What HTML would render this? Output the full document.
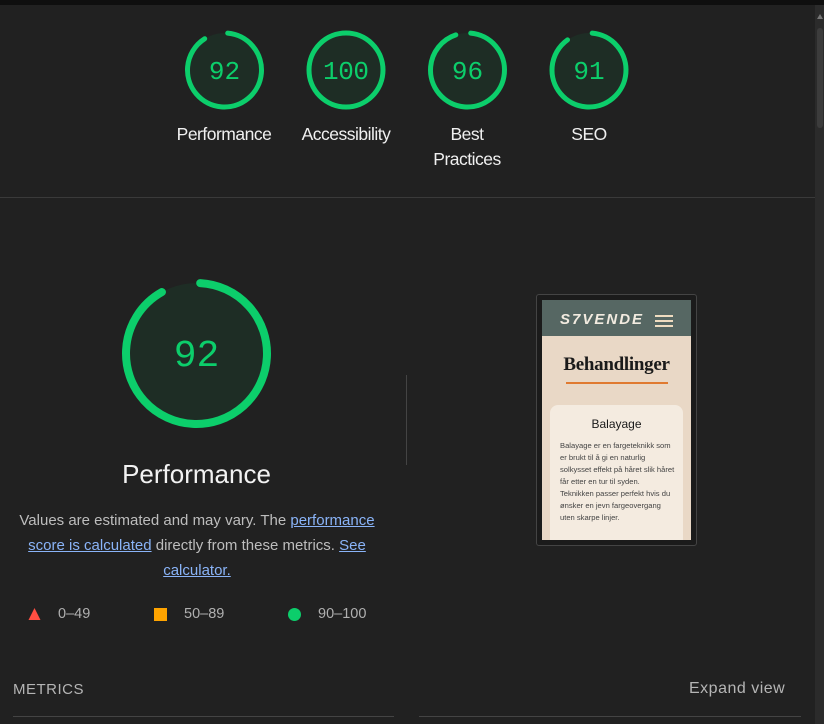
<!DOCTYPE html>
<html><head><meta charset="utf-8"><style>
*{margin:0;padding:0;box-sizing:border-box}
body{width:824px;height:724px;background:#212121;font-family:"Liberation Sans",sans-serif;overflow:hidden;position:relative;color:#e8e8e8}
.abs{position:absolute}
.lbl{position:absolute;width:140px;text-align:center;font-size:17.5px;line-height:25px;color:#f0f0f0;letter-spacing:-0.5px}
.num{font-family:"Liberation Mono",monospace;fill:#0cce6b}
a{color:#8ab4f8;text-decoration:underline}
</style></head><body>
<div class="abs" style="left:0;top:0;width:824px;height:5px;background:#0f0f0f"></div>
<div class="abs" style="left:815px;top:5px;width:9px;height:719px;background:#2b2b2b"></div>
<div class="abs" style="left:817px;top:28px;width:6px;height:100px;background:#3c3c3c;border-radius:3px"></div>
<div class="abs" style="left:817px;top:14px;width:0;height:0;border-left:3px solid transparent;border-right:3px solid transparent;border-bottom:5px solid #777"></div>

<svg class="abs" style="left:0;top:0" width="815" height="200">
<g>
<circle cx="224.5" cy="70" r="37" fill="#1e2d25"/>
<circle cx="346" cy="70" r="37" fill="#1e2d25"/>
<circle cx="467.5" cy="70" r="37" fill="#1e2d25"/>
<circle cx="589" cy="70" r="37" fill="#1e2d25"/>
</g>
<g stroke="#0cce6b" stroke-width="5" fill="none" stroke-linecap="round">
<circle cx="224.5" cy="70" r="37" stroke-dasharray="208 300" transform="rotate(-85 224.5 70)"/>
<circle cx="346" cy="70" r="37" stroke-dasharray="233 300" transform="rotate(-90 346 70)"/>
<circle cx="467.5" cy="70" r="37" stroke-dasharray="217 300" transform="rotate(-85 467.5 70)"/>
<circle cx="589" cy="70" r="37" stroke-dasharray="206 300" transform="rotate(-85 589 70)"/>
</g>
<g class="num" font-size="26" text-anchor="middle">
<text x="224.5" y="79">92</text><text x="346" y="79" textLength="46">100</text><text x="467.5" y="79">96</text><text x="589" y="79">91</text>
</g>
</svg>
<div class="lbl" style="left:154px;top:122px">Performance</div>
<div class="lbl" style="left:276px;top:122px">Accessibility</div>
<div class="lbl" style="left:397px;top:122px">Best<br>Practices</div>
<div class="lbl" style="left:519px;top:122px">SEO</div>
<div class="abs" style="left:0;top:197px;width:815px;height:1px;background:#3a3a3a"></div>

<svg class="abs" style="left:0;top:270px" width="400" height="170">
<circle cx="196.5" cy="83.5" r="70.5" fill="#1e2d25"/>
<circle cx="196.5" cy="83.5" r="70.5" fill="none" stroke="#0cce6b" stroke-width="8" stroke-linecap="round" stroke-dasharray="403 500" transform="rotate(-87 196.5 83.5)"/>
<text x="196.5" y="96" text-anchor="middle" class="num" font-size="38">92</text>
</svg>
<div class="abs" style="left:0;top:459px;width:393px;text-align:center;font-size:26px;color:#f2f2f2">Performance</div>
<div class="abs" style="left:12px;top:508px;width:370px;text-align:center;font-size:15px;line-height:25px;color:#bdbdbd">Values are estimated and may vary. The <a>performance score is calculated</a> directly from these metrics. <a>See calculator.</a></div>
<div class="abs" style="left:406px;top:375px;width:1px;height:90px;background:#444"></div>

<svg class="abs" style="left:28px;top:607px" width="14" height="14"><polygon points="6.5,1 12.5,13 0.5,13" fill="#ff4e42"/></svg>
<div class="abs" style="left:58px;top:606px;font-size:14.5px;color:#b0b0b0">0–49</div>
<div class="abs" style="left:154px;top:608px;width:13px;height:13px;background:#ffa400"></div>
<div class="abs" style="left:184px;top:606px;font-size:14.5px;color:#b0b0b0">50–89</div>
<div class="abs" style="left:288px;top:608px;width:13px;height:13px;border-radius:50%;background:#0cce6b"></div>
<div class="abs" style="left:318px;top:606px;font-size:14.5px;color:#b0b0b0">90–100</div>

<div class="abs" style="left:13px;top:681px;font-size:15px;letter-spacing:0.5px;color:#b5b5b5">METRICS</div>
<div class="abs" style="left:689px;top:680px;font-size:16px;letter-spacing:0.5px;color:#b5b5b5">Expand view</div>
<div class="abs" style="left:13px;top:716px;width:381px;height:1px;background:#444"></div>
<div class="abs" style="left:419px;top:716px;width:382px;height:1px;background:#444"></div>

<div class="abs" style="left:536px;top:294px;width:161px;height:252px;border:1px solid #444;border-radius:3px;background:#1b1b1b"></div>
<div class="abs" style="left:542px;top:300px;width:149px;height:240px;background:#e9d8c6;overflow:hidden">
 <div style="height:36px;background:#566763;position:relative">
  <div style="position:absolute;left:18px;top:11px;font-size:15px;font-style:italic;font-weight:bold;color:#f2ebe0;letter-spacing:2px;font-family:'Liberation Sans',sans-serif">S7VENDE</div>
  <div style="position:absolute;left:113px;top:15px;width:18px;height:2px;background:#efdcc0;box-shadow:0 5px 0 #efdcc0,0 10px 0 #efdcc0"></div>
 </div>
 <div style="text-align:center;font-family:'Liberation Serif',serif;font-weight:bold;font-size:19px;color:#1a1a1a;margin-top:18px;letter-spacing:-0.3px">Behandlinger</div>
 <div style="margin:6px auto 0;width:102px;height:2px;background:#e07a30"></div>
 <div style="margin:21px 8px 0;background:#f4ebe0;border-radius:8px;height:150px;padding:12px 10px">
  <div style="text-align:center;font-size:12px;color:#1a1a1a">Balayage</div>
  <div style="font-size:7.6px;line-height:12px;color:#444;margin-top:9px;width:115px">Balayage er en fargeteknikk som er brukt til å gi en naturlig solkysset effekt på håret slik håret får etter en tur til syden. Teknikken passer perfekt hvis du ønsker en jevn fargeovergang uten skarpe linjer.</div>
 </div>
</div>
</body></html>
